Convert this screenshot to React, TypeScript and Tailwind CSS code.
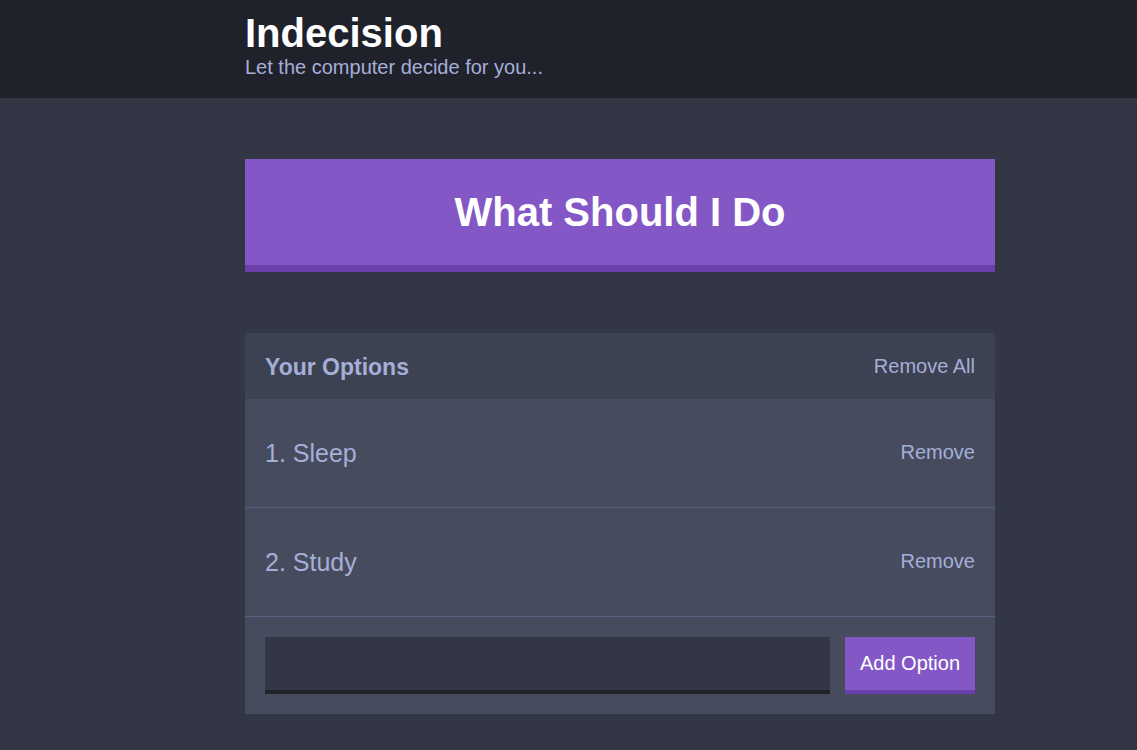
export default function App() {
  const options = ["Sleep", "Study"];
  return (
    <div className="min-h-[750px] bg-[#333745] font-['Liberation_Sans',Arial,sans-serif]">
      <header className="h-[98px] bg-[#20222b] pt-[13px]">
        <div className="ml-[245px] w-[750px]">
          <h1 className="text-[40px] leading-[40px] font-bold text-white">Indecision</h1>
          <h2 className="mt-[2px] text-[20px] leading-[24px] text-[#a5afd7]">Let the computer decide for you...</h2>
        </div>
      </header>
      <main className="ml-[245px] w-[750px] pt-[61px]">
        <button className="block w-full bg-[#8357c5] border-b-[7px] border-[#6a3fab] py-[30px] text-[40px] leading-[46px] font-bold text-white">
          What Should I Do
        </button>
        <div className="mt-[61px] bg-[#464b5e]">
          <div className="flex items-center justify-between bg-[#3c4251] px-[20px] h-[66px]">
            <h3 className="mt-[2px] text-[23px] leading-[26px] font-bold text-[#a5afd7]">Your Options</h3>
            <button className="text-[20px] leading-[24px] text-[#a5afd7]">Remove All</button>
          </div>
          {options.map((o, i) => (
            <div key={o} className="flex items-center justify-between border-b border-[#596184] px-[20px] h-[109px]">
              <p className="text-[25px] leading-[28px] text-[#a5afd7]">{i + 1}. {o}</p>
              <button className="-mt-[2px] text-[20px] leading-[24px] text-[#a5afd7]">Remove</button>
            </div>
          ))}
          <form className="flex gap-[15px] p-[20px]" onSubmit={(e) => e.preventDefault()}>
            <input className="flex-1 h-[57px] bg-[#333745] border-b-4 border-[#20222b] outline-none text-white px-3" />
            <button className="w-[130px] h-[57px] pb-[2px] bg-[#8357c5] border-b-4 border-[#6a3fab] text-[20px] text-white">
              Add Option
            </button>
          </form>
        </div>
      </main>
    </div>
  );
}
